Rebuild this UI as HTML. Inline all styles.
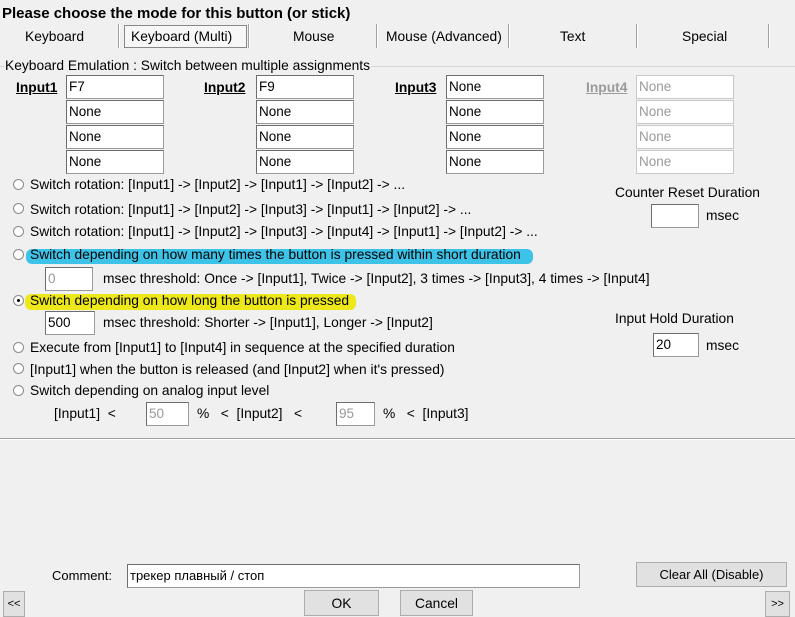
<!DOCTYPE html><html><head><style>
body{margin:0;width:795px;height:613px;background:#f0f0f0;font-family:"Liberation Sans","DejaVu Sans",sans-serif;font-size:13.8px;color:#000;position:relative;overflow:hidden}
.a{position:absolute;white-space:nowrap}
.i{position:absolute;background:#fff;border:1px solid #9a9a9a;border-top-color:#6d6d6d;border-left-color:#6d6d6d;box-sizing:border-box;height:24px;line-height:21px;padding-left:2px;font-size:13.5px}
.g{color:#9a9a9a}
.sep{position:absolute;top:24px;height:24px;width:1px;background:#a0a0a0;border-right:1px solid #fff}
.r{position:absolute;width:9px;height:9px;border-radius:50%;border:1px solid #8a8a8a;background:#fff;left:13px}
.b{position:absolute;border:1px solid #adadad;background:#e1e1e1;box-sizing:border-box;text-align:center}
u{font-weight:bold}
</style></head><body>
<div class="a" style="left:2px;top:5px;font-size:15px;font-weight:bold">Please choose the mode for this button (or stick)</div>
<div class="a" style="left:25px;top:29px">Keyboard</div>
<div class="sep" style="left:118px"></div>
<div class="a" style="left:124px;top:25px;width:123px;height:23px;border:1px solid #888;background:#f7f7f7;box-sizing:border-box"></div>
<div class="a" style="left:131px;top:29px">Keyboard (Multi)</div>
<div class="sep" style="left:248px"></div>
<div class="a" style="left:293px;top:29px">Mouse</div>
<div class="sep" style="left:376px"></div>
<div class="a" style="left:386px;top:29px">Mouse (Advanced)</div>
<div class="sep" style="left:508px"></div>
<div class="a" style="left:560px;top:29px">Text</div>
<div class="sep" style="left:636px"></div>
<div class="a" style="left:682px;top:29px">Special</div>
<div class="sep" style="left:768px"></div>
<div class="a" style="left:0;top:66px;width:795px;height:1px;background:#d5d5d5"></div>
<div class="a" style="left:4px;top:58px;background:#f0f0f0;padding:0 1px">Keyboard Emulation : Switch between multiple assignments</div>
<div class="a" style="left:16px;top:80px"><u>Input1</u></div>
<div class="a" style="left:204px;top:80px"><u>Input2</u></div>
<div class="a" style="left:395px;top:80px"><u>Input3</u></div>
<div class="a g" style="left:586px;top:80px"><u style="color:#9a9a9a">Input4</u></div>
<div class="i" style="left:66px;top:75px;width:98px">F7</div>
<div class="i" style="left:66px;top:100px;width:98px">None</div>
<div class="i" style="left:66px;top:125px;width:98px">None</div>
<div class="i" style="left:66px;top:150px;width:98px">None</div>
<div class="i" style="left:256px;top:75px;width:98px">F9</div>
<div class="i" style="left:256px;top:100px;width:98px">None</div>
<div class="i" style="left:256px;top:125px;width:98px">None</div>
<div class="i" style="left:256px;top:150px;width:98px">None</div>
<div class="i" style="left:446px;top:75px;width:98px">None</div>
<div class="i" style="left:446px;top:100px;width:98px">None</div>
<div class="i" style="left:446px;top:125px;width:98px">None</div>
<div class="i" style="left:446px;top:150px;width:98px">None</div>
<div class="i g" style="left:636px;top:75px;width:98px;border-color:#c8c8c8">None</div>
<div class="i g" style="left:636px;top:100px;width:98px;border-color:#c8c8c8">None</div>
<div class="i g" style="left:636px;top:125px;width:98px;border-color:#c8c8c8">None</div>
<div class="i g" style="left:636px;top:150px;width:98px;border-color:#c8c8c8">None</div>
<div class="a" style="left:26px;top:249px;width:507px;height:15px;background:#3ec3e8;border-radius:6px"></div>
<div class="a" style="left:25px;top:294px;width:331px;height:16px;background:#ede81a;border-radius:6px"></div>
<div class="r" style="top:179px"></div><div class="a" style="left:30px;top:177px">Switch rotation: [Input1] -&gt; [Input2] -&gt; [Input1] -&gt; [Input2] -&gt; ...</div>
<div class="r" style="top:203px"></div><div class="a" style="left:30px;top:202px">Switch rotation: [Input1] -&gt; [Input2] -&gt; [Input3] -&gt; [Input1] -&gt; [Input2] -&gt; ...</div>
<div class="r" style="top:226px"></div><div class="a" style="left:30px;top:224px">Switch rotation: [Input1] -&gt; [Input2] -&gt; [Input3] -&gt; [Input4] -&gt; [Input1] -&gt; [Input2] -&gt; ...</div>
<div class="r" style="top:249px"></div><div class="a" style="left:30px;top:247px">Switch depending on how many times the button is pressed within short duration</div>
<div class="i g" style="left:45px;top:267px;width:48px">0</div>
<div class="a" style="left:103px;top:271px">msec threshold: Once -&gt; [Input1], Twice -&gt; [Input2], 3 times -&gt; [Input3], 4 times -&gt; [Input4]</div>
<div class="r" style="top:295px"></div><div class="a" style="left:17px;top:299px;width:3px;height:3px;background:#000;border-radius:50%"></div>
<div class="a" style="left:30px;top:293px">Switch depending on how long the button is pressed</div>
<div class="i" style="left:45px;top:311px;width:50px">500</div>
<div class="a" style="left:103px;top:315px">msec threshold: Shorter -&gt; [Input1], Longer -&gt; [Input2]</div>
<div class="r" style="top:342px"></div><div class="a" style="left:30px;top:340px">Execute from [Input1] to [Input4] in sequence at the specified duration</div>
<div class="r" style="top:363px"></div><div class="a" style="left:30px;top:362px">[Input1] when the button is released (and [Input2] when it's pressed)</div>
<div class="r" style="top:385px"></div><div class="a" style="left:30px;top:383px">Switch depending on analog input level</div>
<div class="a" style="left:54px;top:406px">[Input1] &nbsp;&lt;</div>
<div class="i g" style="left:146px;top:402px;width:43px">50</div>
<div class="a" style="left:197px;top:406px">% &nbsp; &lt; &nbsp;[Input2] &nbsp; &lt;</div>
<div class="i g" style="left:336px;top:402px;width:39px">95</div>
<div class="a" style="left:383px;top:406px">% &nbsp; &lt; &nbsp;[Input3]</div>
<div class="a" style="left:615px;top:185px">Counter Reset Duration</div>
<div class="i" style="left:651px;top:204px;width:48px"></div>
<div class="a" style="left:706px;top:208px">msec</div>
<div class="a" style="left:615px;top:311px">Input Hold Duration</div>
<div class="i" style="left:653px;top:333px;width:46px">20</div>
<div class="a" style="left:706px;top:338px">msec</div>
<div class="a" style="left:0;top:438px;width:795px;height:1px;background:#a0a0a0;border-bottom:1px solid #fff"></div>
<div class="a" style="left:52px;top:568px;font-size:13px">Comment:</div>
<div class="i" style="left:127px;top:564px;width:453px;font-size:13px">трекер плавный / стоп</div>
<div class="b" style="left:636px;top:562px;width:151px;height:25px;line-height:23px;font-size:13px">Clear All (Disable)</div>
<div class="b" style="left:3px;top:591px;width:22px;height:26px;line-height:24px;font-size:11px">&lt;&lt;</div>
<div class="b" style="left:304px;top:590px;width:75px;height:26px;line-height:26px">OK</div>
<div class="b" style="left:400px;top:590px;width:73px;height:26px;line-height:26px">Cancel</div>
<div class="b" style="left:765px;top:591px;width:25px;height:26px;line-height:24px;font-size:11px">&gt;&gt;</div>
</body></html>
